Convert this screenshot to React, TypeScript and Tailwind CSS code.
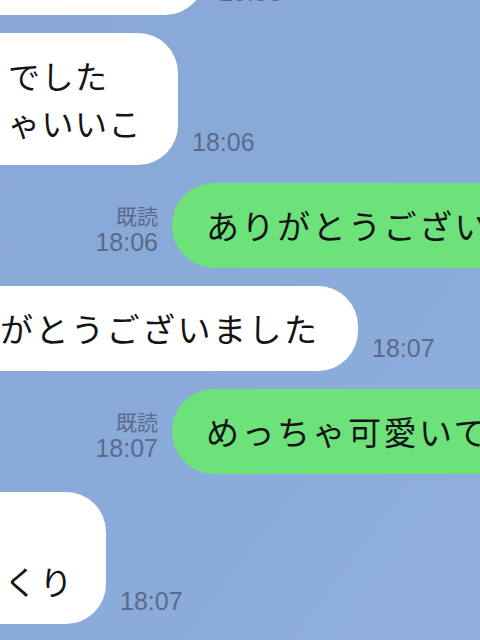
import React from "react";

const jp = { fontFamily: '"Noto Sans CJK JP", "Noto Sans", sans-serif' };
const latin = { fontFamily: '"Liberation Sans", Arial, sans-serif' };

type InProps = { width: string; pad: string; lines: string[]; time: string; text?: string };

const Incoming: React.FC<InProps> = ({ width, pad, lines, time, text = "text-[33px] tracking-[2.5px]" }) => (
  <div className="flex items-end gap-[14px]">
    <div
      className={`-ml-[40px] shrink-0 rounded-[40px] bg-white py-[19px] leading-[47px] text-[#141414] whitespace-nowrap ${text} ${width} ${pad}`}
      style={jp}
    >
      {lines.map((l, i) => (
        <div key={i}>{l}</div>
      ))}
    </div>
    <span className="mb-[12px] text-[25px] leading-[22px] text-[#5a6a8b]" style={latin}>
      {time}
    </span>
  </div>
);

const Outgoing: React.FC<{ text: string; time: string }> = ({ text, time }) => (
  <div className="flex items-end gap-[14px] pl-[94px]">
    <div className="mb-[14px] flex w-[64px] shrink-0 flex-col items-end">
      <span className="text-[21px] leading-[30px] text-[#5a6a8b]" style={jp}>
        既読
      </span>
      <span className="text-[25px] leading-[24px] text-[#5a6a8b]" style={latin}>
        {time}
      </span>
    </div>
    <div
      className="shrink-0 whitespace-nowrap rounded-[42px] bg-[#6de27a] py-[19px] pl-[34px] pr-[80px] text-[33px] leading-[47px] tracking-[2.5px] text-[#141414]"
      style={jp}
    >
      {text}
    </div>
  </div>
);

export default function App() {
  return (
    <div className="h-[640px] w-[480px] overflow-hidden bg-gradient-to-br from-[#89a8d8] via-[#8aaad9] to-[#90afdc]">
      <div className="-mt-[70px] flex flex-col gap-[18px]">
        <Incoming width="w-[245px]" pad="pl-[48px]" lines={["\u3000"]} time="18:06" />
        <Incoming
          width="w-[218px]"
          pad="pl-[48px]"
          lines={["でした", "ゃいいこ"]}
          time="18:06"
          text="text-[32px] tracking-[1.5px]"
        />
        <Outgoing text="ありがとうございます" time="18:06" />
        <Incoming width="w-[398px]" pad="pl-[40px]" lines={["がとうございました"]} time="18:07" />
        <Outgoing text="めっちゃ可愛いて" time="18:07" />
        <Incoming width="w-[146px]" pad="pl-[44px]" lines={["\u3000", "くり"]} time="18:07" />
      </div>
    </div>
  );
}
